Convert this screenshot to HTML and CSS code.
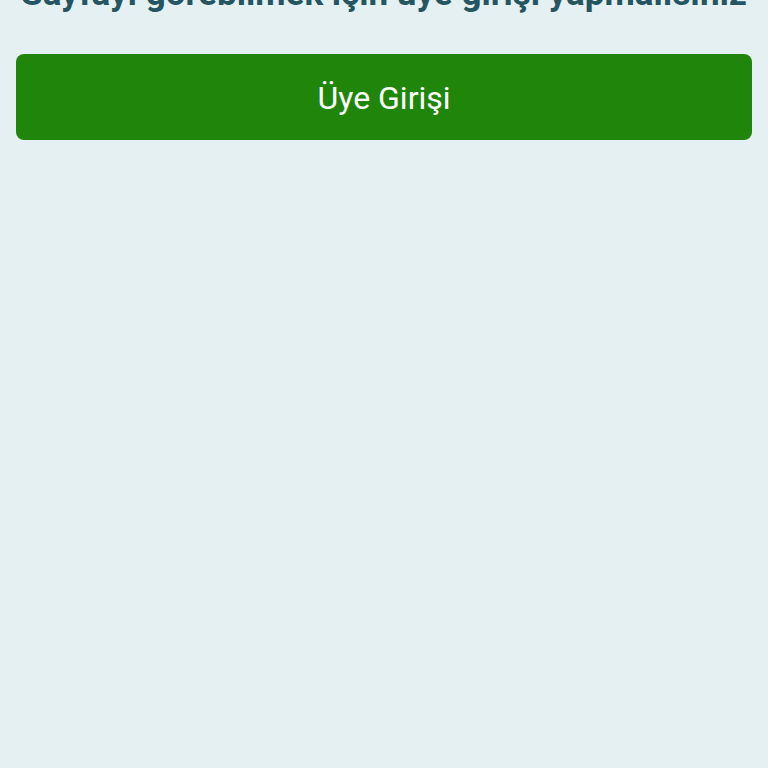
FILE: index.html
```html
<!DOCTYPE html>
<html lang="tr">
<head>
<meta charset="utf-8">
<title>Üye Girişi</title>
<link rel="stylesheet" href="styles.css">
</head>
<body>
<main class="gate">
<h1 class="gate-title">Sayfayı görebilmek için üye girişi yapmalısınız</h1>
<button class="gate-button" type="button">Üye Girişi</button>
</main>
</body>
</html>
```

FILE: styles.css
```css
* { box-sizing: border-box; }
body {
  margin: 0;
  background: #e4f0f2;
  font-family: Roboto, sans-serif;
}
.gate {
  display: flex;
  flex-direction: column;
  gap: 40px;
  margin-top: -26px;
  padding: 0 16px;
}
.gate-title {
  margin: 0;
  color: #245561;
  font-size: 35px;
  font-weight: 700;
  line-height: 40px;
  text-align: center;
  white-space: nowrap;
}
.gate-button {
  width: 100%;
  padding: 24px 16px 22px;
  border: 0;
  border-radius: 8px;
  background: #1f860b;
  color: #fff;
  font-family: inherit;
  font-size: 32px;
  line-height: 40px;
}
```
